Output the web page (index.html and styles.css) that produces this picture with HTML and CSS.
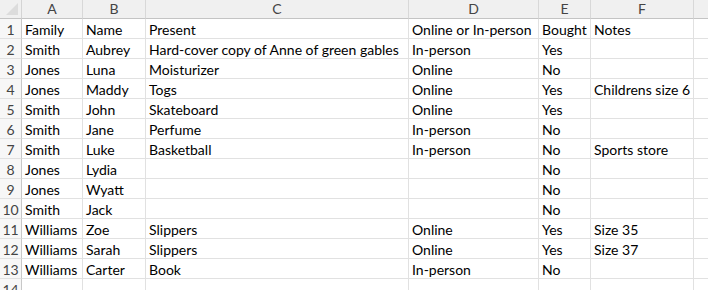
FILE: index.html
```html
<!DOCTYPE html>
<html>
<head>
<meta charset="utf-8">
<link rel="stylesheet" href="styles.css">
</head>
<body>
<div class="sheet">
  <div class="corner"><span class="tri"></span></div>
  <div class="ch">A</div><div class="ch">B</div><div class="ch">C</div><div class="ch">D</div><div class="ch">E</div><div class="ch">F</div><div class="ch"></div>

  <div class="rh">1</div><div class="c">Family</div><div class="c">Name</div><div class="c">Present</div><div class="c">Online or In-person</div><div class="c">Bought</div><div class="c">Notes</div><div class="c"></div>
  <div class="rh">2</div><div class="c">Smith</div><div class="c">Aubrey</div><div class="c">Hard-cover copy of Anne of green gables</div><div class="c">In-person</div><div class="c">Yes</div><div class="c"></div><div class="c"></div>
  <div class="rh">3</div><div class="c">Jones</div><div class="c">Luna</div><div class="c">Moisturizer</div><div class="c">Online</div><div class="c">No</div><div class="c"></div><div class="c"></div>
  <div class="rh">4</div><div class="c">Jones</div><div class="c">Maddy</div><div class="c">Togs</div><div class="c">Online</div><div class="c">Yes</div><div class="c">Childrens size 6</div><div class="c"></div>
  <div class="rh">5</div><div class="c">Smith</div><div class="c">John</div><div class="c">Skateboard</div><div class="c">Online</div><div class="c">Yes</div><div class="c"></div><div class="c"></div>
  <div class="rh">6</div><div class="c">Smith</div><div class="c">Jane</div><div class="c">Perfume</div><div class="c">In-person</div><div class="c">No</div><div class="c"></div><div class="c"></div>
  <div class="rh">7</div><div class="c">Smith</div><div class="c">Luke</div><div class="c">Basketball</div><div class="c">In-person</div><div class="c">No</div><div class="c">Sports store</div><div class="c"></div>
  <div class="rh">8</div><div class="c">Jones</div><div class="c">Lydia</div><div class="c"></div><div class="c"></div><div class="c">No</div><div class="c"></div><div class="c"></div>
  <div class="rh">9</div><div class="c">Jones</div><div class="c">Wyatt</div><div class="c"></div><div class="c"></div><div class="c">No</div><div class="c"></div><div class="c"></div>
  <div class="rh">10</div><div class="c">Smith</div><div class="c">Jack</div><div class="c"></div><div class="c"></div><div class="c">No</div><div class="c"></div><div class="c"></div>
  <div class="rh">11</div><div class="c">Williams</div><div class="c">Zoe</div><div class="c">Slippers</div><div class="c">Online</div><div class="c">Yes</div><div class="c">Size 35</div><div class="c"></div>
  <div class="rh">12</div><div class="c">Williams</div><div class="c">Sarah</div><div class="c">Slippers</div><div class="c">Online</div><div class="c">Yes</div><div class="c">Size 37</div><div class="c"></div>
  <div class="rh">13</div><div class="c">Williams</div><div class="c">Carter</div><div class="c">Book</div><div class="c">In-person</div><div class="c">No</div><div class="c"></div><div class="c"></div>
  <div class="rh">14</div><div class="c"></div><div class="c"></div><div class="c"></div><div class="c"></div><div class="c"></div><div class="c"></div><div class="c"></div>
</div>
</body>
</html>
```
FILE: styles.css
```css
html, body {
  margin: 0;
  padding: 0;
  background: #ffffff;
  overflow: hidden;
}
.sheet {
  display: grid;
  grid-template-columns: 22px 61px 63px 263px 130px 52px 103px 40px;
  grid-template-rows: 19px repeat(14, 20px);
  font-family: Lato, "Open Sans", sans-serif;
  font-size: 14px;
  color: #000;
}
.sheet > div {
  box-sizing: border-box;
  border-right: 1px solid #e1e1e1;
  border-bottom: 1px solid #e1e1e1;
  white-space: nowrap;
  overflow: visible;
}
.corner {
  background: #f0f0f0;
  position: relative;
  border-bottom: 1px solid #c4c4c4 !important;
  border-right: 1px solid #d4d4d4 !important;
}
.tri {
  position: absolute;
  right: 3px;
  bottom: 3px;
  width: 0;
  height: 0;
  border-left: 12px solid transparent;
  border-bottom: 12px solid #dcdcdc;
}
.ch {
  background: #f0f0f0;
  color: #444;
  text-align: center;
  line-height: 18px;
  border-bottom: 1px solid #c4c4c4 !important;
  border-right: 1px solid #d8d8d8 !important;
}
.rh {
  background: #f7f7f7;
  color: #444;
  text-align: center;
  line-height: 21px;
  border-right: 1px solid #c8c8c8 !important;
}
.c {
  padding-left: 3px;
  line-height: 21px;
}
```
